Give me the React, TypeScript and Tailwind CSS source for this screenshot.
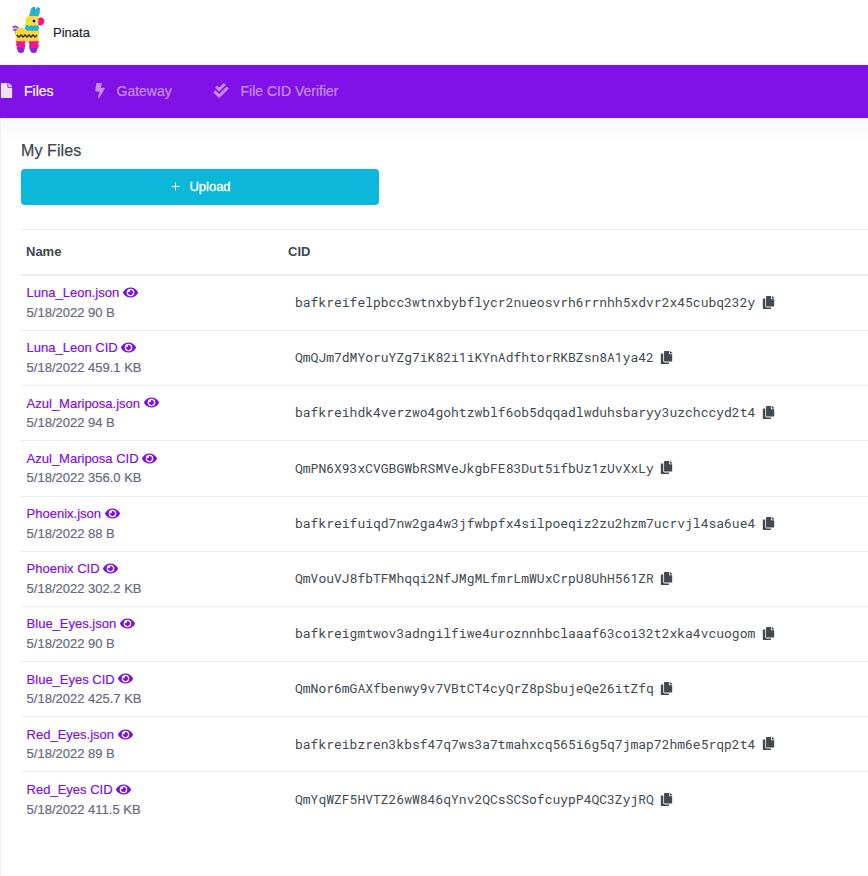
import React from "react";
import { FaEye, FaCopy, FaFile, FaBolt, FaCheckDouble } from "react-icons/fa";

const files = [
  { name: "Luna_Leon.json", size: "90 B", cid: "bafkreifelpbcc3wtnxbybflycr2nueosvrh6rrnhh5xdvr2x45cubq232y" },
  { name: "Luna_Leon CID", size: "459.1 KB", cid: "QmQJm7dMYoruYZg7iK82i1iKYnAdfhtorRKBZsn8A1ya42" },
  { name: "Azul_Mariposa.json", size: "94 B", cid: "bafkreihdk4verzwo4gohtzwblf6ob5dqqadlwduhsbaryy3uzchccyd2t4" },
  { name: "Azul_Mariposa CID", size: "356.0 KB", cid: "QmPN6X93xCVGBGWbRSMVeJkgbFE83Dut5ifbUz1zUvXxLy" },
  { name: "Phoenix.json", size: "88 B", cid: "bafkreifuiqd7nw2ga4w3jfwbpfx4silpoeqiz2zu2hzm7ucrvjl4sa6ue4" },
  { name: "Phoenix CID", size: "302.2 KB", cid: "QmVouVJ8fbTFMhqqi2NfJMgMLfmrLmWUxCrpU8UhH561ZR" },
  { name: "Blue_Eyes.json", size: "90 B", cid: "bafkreigmtwov3adngilfiwe4uroznnhbclaaaf63coi32t2xka4vcuogom" },
  { name: "Blue_Eyes CID", size: "425.7 KB", cid: "QmNor6mGAXfbenwy9v7VBtCT4cyQrZ8pSbujeQe26itZfq" },
  { name: "Red_Eyes.json", size: "89 B", cid: "bafkreibzren3kbsf47q7ws3a7tmahxcq565i6g5q7jmap72hm6e5rqp2t4" },
  { name: "Red_Eyes CID", size: "411.5 KB", cid: "QmYqWZF5HVTZ26wW846qYnv2QCsSCSofcuypP4QC3ZyjRQ" },
];

function Logo() {
  return (
    <svg viewBox="36 18 99 144" className="h-12 w-[33px] shrink-0">
      <path d="M53 105C43 101 52 94 49 90C46 87 43 89 40 92M51 98C58 92 55 81 48 80C44 79 41 81 38 82" fill="none" stroke="#9540e0" strokeWidth="6" />
      <path d="M86 52L90 38L92 27L99 20L105 22L106 29L113 21L120 24L119 39L115 52Z" fill="#27b6cf" />
      <path d="M99 22L104 23L105 33L101 40Z" fill="#1aa0bd" />
      <path d="M76 72H117L115 78L118 83L115 88L117 95H75L77 88L74 83L77 78Z" fill="#23b5cd" />
      <path d="M77 54Q81 49 89 48H114L121 56V75H114L110 79L105 75L99 79L94 75L88 79L83 76H76Z" fill="#fbdc3c" />
      <path d="M115 56L122 52L130 55L133 64L130 73L121 77L115 74Z" fill="#f5128c" />
      <circle cx="102" cy="63" r="6" fill="#fff" />
      <circle cx="102" cy="63" r="4.5" fill="#111" />
      <path d="M48 93L53 84H74L80 92H117L118 101L115 105L118 110L116 115L118 125H47L49 117L46 112L49 107L46 102Z" fill="#fbd83a" />
      <path d="M50 105L57 111L63 105L69 111L75 105L81 111L87 105L93 111L99 105L105 111L111 105" fill="none" stroke="#29231a" strokeWidth="4" />
      <path d="M47 124H77L74 131L76 137L73 147H50L51 139L47 134L50 130ZM85 124H118L114 131L117 137L112 147H89L87 139L89 134Z" fill="#f5128c" />
      <path d="M51 144H74L71 157L63 160L54 156ZM89 144H112L109 157L102 160L92 156Z" fill="#8629d3" />
    </svg>
  );
}

export default function App() {
  return (
    <div className="flex h-[876px] w-[868px] flex-col overflow-hidden bg-white font-['Liberation_Sans',Arial,sans-serif] text-[13px]">
      <header className="flex h-[65px] shrink-0 items-start pl-3 pt-1.5">
        <Logo />
        <span className="ml-2 mt-[17px] text-[13px] leading-5 text-[#212529] [-webkit-text-stroke:0.15px]">Pinata</span>
      </header>
      <nav className="flex h-[53px] shrink-0 items-center bg-[#8012e8] text-[14px] text-[#c68ef5] [-webkit-text-stroke:0.2px]">
        <div className="flex w-[94px] items-center text-white">
          <FaFile className="mb-0.5 h-[15px] w-[13px] text-[#f0e0fd]" />
          <span className="ml-[11px]">Files</span>
        </div>
        <div className="flex w-[119px] items-center">
          <FaBolt className="mb-0.5 h-[15px] w-3" />
          <span className="ml-[10.5px]">Gateway</span>
        </div>
        <div className="flex items-center">
          <FaCheckDouble className="mb-0.5 h-[15px] w-4" />
          <span className="ml-[11.5px]">File CID Verifier</span>
        </div>
      </nav>
      <main className="grow border-l border-[#f1f0f8] bg-linear-to-b from-[#f9f9f9] to-white to-[28px] pl-5">
        <h1 className="pt-[21px] text-base leading-6 tracking-[0.1px] text-[#3d474f] [-webkit-text-stroke:0.25px]">My Files</h1>
        <button className="mt-[6px] flex h-9 w-[358px] items-center justify-center rounded-[4px] bg-[#0cb7da] pl-0.5 text-[13px] text-white">
          <svg viewBox="0 0 9 9" className="mb-0.5 mr-[9px] size-[9px]" fill="none" stroke="currentColor"><path d="M4.5 0.5V8.5M0.5 4.5H8.5" /></svg>
          <span className="[-webkit-text-stroke:0.3px]">Upload</span>
        </button>
        <table className="mt-6 w-full table-fixed border-separate border-spacing-0 text-left">
          <thead>
            <tr className="h-[46.8px] font-bold text-[#3d474f]">
              <th className="w-[262px] border-t border-b-2 border-t-[#eeeef1] border-b-[#e9edf1] pl-[5px]">Name</th>
              <th className="border-t border-b-2 border-t-[#eeeef1] border-b-[#e9edf1] pl-[5px]">CID</th>
            </tr>
          </thead>
          <tbody className="[&_tr:last-child_td]:border-b-0">
            {files.map((file) => (
              <tr key={file.name} className="h-[55.2px]">
                <td className="border-b border-[#ebedf1] pb-[0.2px] pl-[5.6px] [-webkit-text-stroke:0.2px]">
                  <div className="flex items-center leading-[19.5px] text-[#7f10e5]">
                    <span className="whitespace-nowrap">{file.name}</span>
                    <FaEye className="mb-px ml-[3.5px] size-[15px]" />
                  </div>
                  <div className="leading-[19.5px] text-[#68697f]">5/18/2022 {file.size}</div>
                </td>
                <td className="border-b border-[#ebedf1] pb-[0.2px] pl-3">
                  <div className="flex items-center text-[#42494f]">
                    <span className="whitespace-nowrap font-['Roboto_Mono','Liberation_Mono',monospace] text-[13px]">{file.cid}</span>
                    <FaCopy className="mb-px ml-[6.5px] size-[13px]" />
                  </div>
                </td>
              </tr>
            ))}
          </tbody>
        </table>
      </main>
    </div>
  );
}
